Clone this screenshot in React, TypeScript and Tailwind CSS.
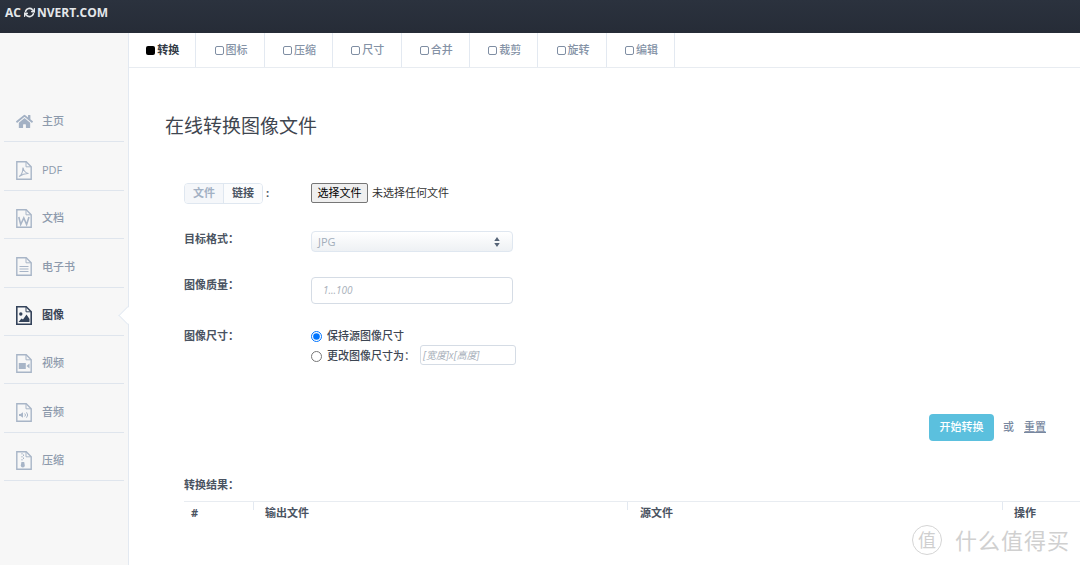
import type { ReactNode } from 'react'
import { FaHome } from 'react-icons/fa'
import { FiRefreshCw } from 'react-icons/fi'

const cjk = "font-['Open_Sans','Noto_Sans_CJK_SC',sans-serif]"

const tabs = ['转换', '图标', '压缩', '尺寸', '合并', '裁剪', '旋转', '编辑']

const FileIcon = ({ children, active }: { children?: ReactNode; active?: boolean }) => (
  <svg
    viewBox="0 0 16 19"
    className={active ? 'h-[19px] w-4 text-[#34435a]' : 'h-[19px] w-4 text-[#a8b5c7]'}
    fill="none"
    stroke="currentColor"
  >
    <path d="M.8.8h9.4l5 5v12.4H.8z" strokeWidth={active ? 1.6 : 1.4} />
    <path d="M10 .8v5h5" strokeWidth="1" />
    {children}
  </svg>
)

const navItems: { label: string; icon: ReactNode; active?: boolean }[] = [
  { label: '主页', icon: <FaHome className="h-[17px] w-[17px] text-[#a3b1c4]" /> },
  {
    label: 'PDF',
    icon: (
      <FileIcon>
        <path d="M3 15.5c2.2-1 3.8-4.5 4-9 .6 3.2 2.5 5.4 5.5 6-3.2-.2-6.5 1-9.5 3z" strokeWidth="1.1" />
      </FileIcon>
    ),
  },
  {
    label: '文档',
    icon: (
      <FileIcon>
        <path d="M2.8 8l1.900 7.500L7.800 9l2.800 6.500L13 8" strokeWidth="1.6" />
      </FileIcon>
    ),
  },
  {
    label: '电子书',
    icon: (
      <FileIcon>
        <path d="M3.5 9.5h9M3.5 12h9M3.5 14.5h9" strokeWidth="1.2" />
      </FileIcon>
    ),
  },
  {
    label: '图像',
    active: true,
    icon: (
      <FileIcon active>
        <circle cx="4.8" cy="8" r="1.7" fill="currentColor" stroke="none" />
        <path d="M2.5 16l3-3.500 1.500 1 3.500-5 3 4.500v3z" fill="currentColor" stroke="none" />
      </FileIcon>
    ),
  },
  {
    label: '视频',
    icon: (
      <FileIcon>
        <path d="M2.8 9h7v6h-7zM10.500 12l3-2.500v5z" fill="currentColor" stroke="none" />
      </FileIcon>
    ),
  },
  {
    label: '音频',
    icon: (
      <FileIcon>
        <path d="M3 11h1.500L7 9.300v5.400L4.500 13H3z" fill="currentColor" stroke="none" />
        <path d="M8.700 10.500a2 2 0 0 1 0 3M10.500 9.300a4 4 0 0 1 0 5.400" strokeWidth="1" />
      </FileIcon>
    ),
  },
  {
    label: '压缩',
    icon: (
      <FileIcon>
        <path d="M6 2v1.500M7.500 3.500V5M6 5v1.500M7.500 6.500V8M6 8v1.500" strokeWidth="1" />
        <path d="M5.400 11h2.800l.6 3.500a2 2 0 0 1-4 0z" fill="currentColor" stroke="none" />
      </FileIcon>
    ),
  },
]

const Sidebar = () => (
  <aside className="relative w-[129px] shrink-0 border-r border-[#e3e9f1] bg-[#f7f7f7] pt-[61px]">
    {navItems.map((item) => (
      <div
        key={item.label}
        className="mx-1 flex h-[48.4px] items-center border-b border-[#dfe5ed] pl-3 pt-[8px]"
      >
        <span className="flex w-[26px] shrink-0">{item.icon}</span>
        <span
          className={
            item.active
              ? 'text-[11px] font-bold text-[#3a4557]'
              : 'text-[11px] font-medium text-[#8d9aac]'
          }
        >
          {item.label}
        </span>
      </div>
    ))}
    {/* notch pointing at the active item */}
    <span className="absolute top-[276px] right-[-6px] h-[13px] w-[13px] rotate-45 border-b border-l border-[#e3e9f1] bg-white" />
  </aside>
)

const Tabs = () => (
  <div className="-ml-px flex h-[35px] border-b border-[#e8ecf1]">
    {tabs.map((tab, index) => (
      <div
        key={tab}
        className="flex w-[68.4px] items-center justify-center gap-[2px] border-r border-[#e3e9f1] pl-[2px] text-[11px]"
      >
        {index === 0 ? (
          <span className="h-[9px] w-[9px] rounded-[2px] bg-black" />
        ) : (
          <span className="h-[9px] w-[9px] rounded-[2px] border border-[#7f8ea3]" />
        )}
        <span className={index === 0 ? 'font-bold text-[#333b47]' : 'font-medium text-[#8492a6]'}>
          {tab}
        </span>
      </div>
    ))}
  </div>
)

const Label = ({ children }: { children: ReactNode }) => (
  <div className="w-[127px] shrink-0 text-[11px] font-bold text-[#4a5361]">{children}</div>
)

const Form = () => (
  <div className="ml-[55px] mt-[41px]">
    <div className="flex h-[22px] items-center">
      <div className="w-[127px] shrink-0">
        <div className="flex items-center text-[11px] font-bold">
          <div className="flex h-[21px] overflow-hidden rounded-[4px] border border-[#dfe7f0]">
            <span className="flex w-[39px] items-center justify-center border-r border-[#dfe7f0] bg-[#f5f7fa] text-[#a3b1c4]">
              文件
            </span>
            <span className="flex w-[38px] items-center justify-center bg-[#fbfcfd] text-[#4a5361]">
              链接
            </span>
          </div>
          <span className="ml-[3px] text-[#4a5361]">:</span>
        </div>
      </div>
      <button className="h-[20px] w-[57px] rounded-[2px] border border-[#767676] bg-[#efefef] text-[11px] text-black">
        选择文件
      </button>
      <span className="ml-1 text-[11px] text-[#333]">未选择任何文件</span>
    </div>

    <div className="mt-[27px] flex">
      <Label>目标格式：</Label>
      <div className="flex h-[21px] w-[202px] items-center justify-between rounded-[4px] border border-[#dfe7f0] bg-gradient-to-b from-white to-[#eef1f4] px-[6px] pt-[1px] text-[11px] text-[#a2adba]">
        JPG
        <svg viewBox="0 0 6 11" className="mr-[6px] h-[10px] w-[6px] text-[#566477]" fill="currentColor">
          <path d="M3 0l3 4.300H0zM3 11L0 6.700h6z" />
        </svg>
      </div>
    </div>

    <div className="mt-[25px] flex">
      <Label>图像质量：</Label>
      <div className="flex h-[27px] w-[202px] items-center rounded-[4px] border border-[#d5dce5] bg-white pl-[11px] text-[10px] italic text-[#a8b0ba]">
        1...100
      </div>
    </div>

    <div className="mt-[22px] flex">
      <div className="pt-[2px]">
        <Label>图像尺寸：</Label>
      </div>
      <div className="text-[11px] font-medium text-[#3d4653]">
        <div className="flex h-[20px] items-center">
          <input type="radio" name="size" defaultChecked className="m-0 h-[11px] w-[11px]" />
          <span className="ml-[5px]">保持源图像尺寸</span>
        </div>
        <div className="flex h-[20px] items-center">
          <input type="radio" name="size" className="m-0 h-[11px] w-[11px]" />
          <span className="ml-[5px] w-[93px]">更改图像尺寸为：</span>
          <div className="-mt-[2px] flex h-[20px] w-[96px] items-center rounded-[3px] border border-[#d5dce5] pl-[2px] text-[10px] font-normal italic text-[#a8b0ba]">
            [宽度]x[高度]
          </div>
        </div>
      </div>
    </div>
  </div>
)

const Actions = () => (
  <div className="mt-[48px] flex items-center">
    <div className="ml-[800px] flex h-[27px] w-[65px] items-center justify-center rounded-[4px] bg-[#5bc0de] text-[11px] font-medium text-white">
      开始转换
    </div>
    <span className="ml-[9px] text-[11px] font-medium text-[#7888a0]">或</span>
    <span className="ml-[10px] text-[11px] font-medium text-[#7888a0] underline">重置</span>
  </div>
)

const Results = () => (
  <div className="ml-[55px] mt-[36px]">
    <div className="text-[11px] font-bold leading-[16px] text-[#4a5361]">转换结果：</div>
    <div className="mt-[8px] grid h-[24px] grid-cols-[69px_374px_375px_1fr] border-t border-[#e8ecf1] text-[11px] font-bold text-[#4a5361]">
      <div className="flex pl-[7px] pt-[3px]">#</div>
      <div className="h-[8px] border-l border-[#e3e9f1] pl-[11px] pt-[3px]">输出文件</div>
      <div className="h-[8px] border-l border-[#e3e9f1] pl-[12px] pt-[3px]">源文件</div>
      <div className="h-[8px] border-l border-[#e3e9f1] pl-[11px] pt-[3px]">操作</div>
    </div>
  </div>
)

export default function App() {
  return (
    <div className={`relative flex h-[565px] w-[1080px] flex-col overflow-hidden bg-white ${cjk}`}>
      <header className="flex h-[33px] shrink-0 items-start bg-gradient-to-b from-[#2b323e] to-[#262c37] pl-[5px] pt-[4px]">
        <div className="flex items-center text-[12px] font-bold leading-[17px] text-[#e4e7ea]">
          AC
          <FiRefreshCw className="ml-[3px] mr-[2px] h-[11px] w-[11px]" strokeWidth={3.5} />
          NVERT.COM
        </div>
      </header>

      <div className="flex min-h-0 flex-1">
        <Sidebar />
        <main className="min-w-0 flex-1">
          <Tabs />
          <h1 className="ml-[36px] mt-[43px] text-[19px] font-normal leading-[30px] text-[#3f4650]">
            在线转换图像文件
          </h1>
          <Form />
          <Actions />
          <Results />
        </main>
      </div>

      {/* site watermark over the screenshot */}
      <div className="pointer-events-none absolute right-[10px] bottom-[10px] flex items-center text-[#d0d0d0]">
        <span className="mr-[13px] flex h-[30px] w-[30px] items-center justify-center rounded-full border border-[#d5d5d5] text-[18px] leading-none text-[#cfcfcf]">
          值
        </span>
        <span className="text-[22px] font-normal leading-[24px] tracking-[1px]">什么值得买</span>
      </div>
    </div>
  )
}
